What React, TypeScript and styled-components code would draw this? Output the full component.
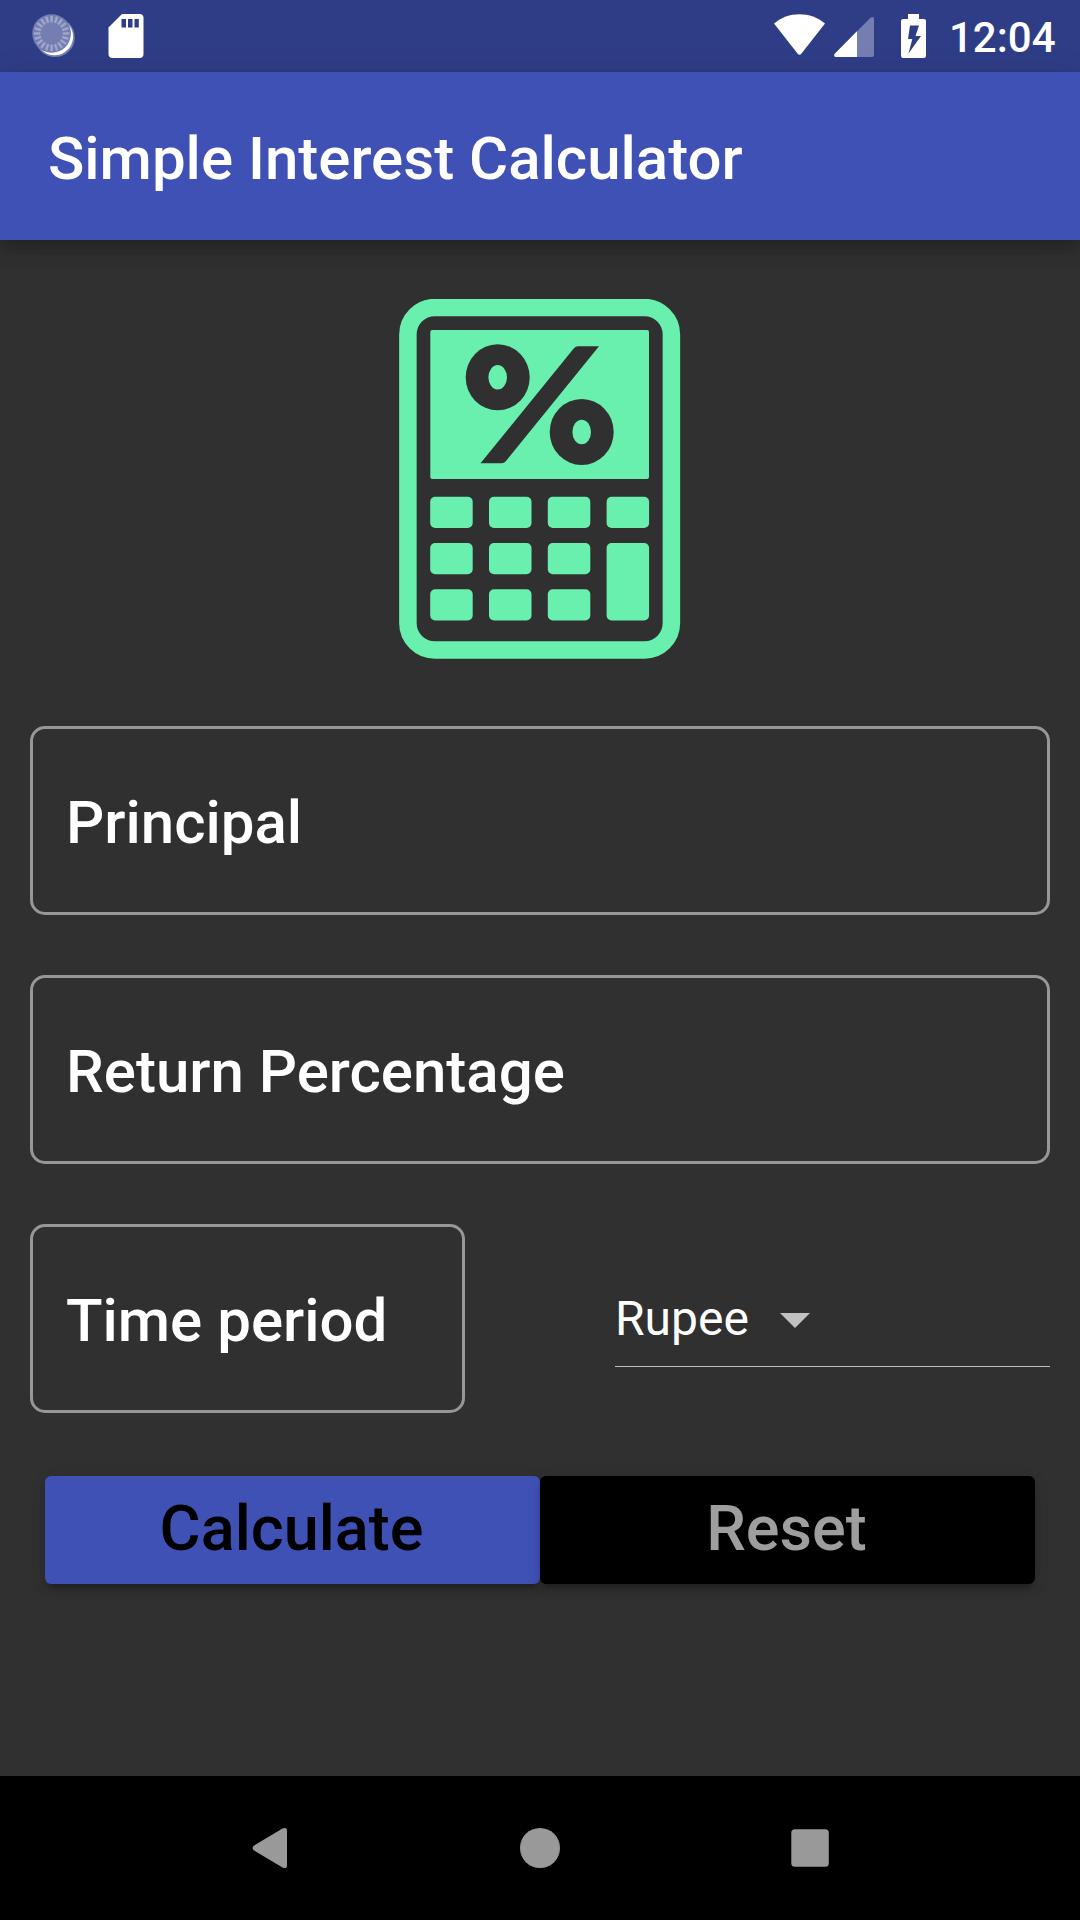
import React from "react";
import styled, { createGlobalStyle } from "styled-components";

const GlobalStyle = createGlobalStyle`
  * { box-sizing: border-box; }
  body { margin: 0; background: #303030; }
`;

const Screen = styled.div`
  display: flex;
  flex-direction: column;
  width: 1080px;
  height: 1920px;
  overflow: hidden;
  background: #303030;
  color: #fff;
  font-family: Roboto, "Noto Sans", sans-serif;
`;

const StatusBar = styled.header`
  display: flex;
  justify-content: space-between;
  flex: none;
  height: 72px;
  padding: 0 24.5px 0 32px;
  background: #2f3d87;
`;

const StatusGroup = styled.div`
  display: flex;
  height: 72px;
  svg { display: block; flex: none; }
`;

const Clock = styled.span`
  padding-top: 2px;
  margin-left: 19px;
  font-size: 42px;
  font-weight: 500;
  line-height: 72px;
`;

const AppBar = styled.div`
  display: flex;
  align-items: center;
  flex: none;
  height: 168px;
  padding: 5px 48px 0;
  background: #3f51b5;
  box-shadow: 0 6px 12px -3px rgba(0, 0, 0, 0.14), 0 12px 15px rgba(0, 0, 0, 0.1), 0 3px 30px rgba(0, 0, 0, 0.1);
`;

const Title = styled.h1`
  margin: 0;
  font-size: 60px;
  font-weight: 500;
  line-height: 70px;
`;

const Form = styled.main`
  display: flex;
  flex: 1;
  flex-direction: column;
  gap: 60px;
  padding: 59px 30px 0;
`;

const Logo = styled.svg`
  display: block;
  flex: none;
  align-self: center;
  width: 282px;
  height: 360px;
  margin: 0 0 7px;
`;

const Field = styled.label<{ $width?: number }>`
  display: flex;
  align-items: center;
  flex: none;
  width: ${(p) => (p.$width ? `${p.$width}px` : "100%")};
  height: 189px;
  padding: 4px 33px 0;
  border: 3px solid #979797;
  border-radius: 15px;
  font-size: 60px;
  font-weight: 500;
  line-height: 70px;
`;

const Row = styled.div`
  display: flex;
  align-items: flex-start;
  justify-content: space-between;
`;

const Dropdown = styled.div`
  display: flex;
  gap: 31px;
  width: 435px;
  height: 97px;
  margin-top: 46px;
  border-bottom: 1px solid #bdbdbd;
  font-size: 48px;
  line-height: 97px;
`;

const Arrow = styled.svg`
  display: block;
  width: 30px;
  height: 15px;
  margin-top: 43px;
`;

const Actions = styled.div`
  display: flex;
  margin: 3px 15px 0;
`;

const Button = styled.button<{ $bg: string; $fg: string }>`
  flex: 1;
  height: 108px;
  padding: 0 2px 3px 0;
  border: 0;
  border-radius: 6px;
  background: ${(p) => p.$bg};
  color: ${(p) => p.$fg};
  font: 500 63px/74px Roboto, "Noto Sans", sans-serif;
  box-shadow: 0 9px 3px -6px rgba(0, 0, 0, 0.16), 0 6px 6px rgba(0, 0, 0, 0.12), 0 3px 15px rgba(0, 0, 0, 0.1);
`;

const NavBar = styled.nav`
  display: flex;
  align-items: center;
  justify-content: center;
  gap: 210px;
  flex: none;
  height: 144px;
  background: #000;
  svg { display: block; width: 60px; height: 60px; fill: #999; }
`;

const ticks = Array.from({ length: 20 }, (_, i) => i * 18);

const keys = [0, 1, 2].flatMap((row) =>
  [0, 1, 2, 3].filter((col) => row === 0 || col < 3).map((col) => ({ x: 31.2 + col * 58.8, y: 197.8 + row * 46.2 }))
);

const LeftIcons = () => (
  <svg width="120" height="72" viewBox="32 0 120 72">
    <circle cx="55" cy="37.300" r="19.800" fill="#fff" opacity=".35" />
    <circle cx="54.500" cy="36.700" r="18.600" fill="#fff" />
    <circle cx="51.600" cy="33.500" r="19.300" fill="#747eb1" />
    {ticks.map((a) => (
      <path key={a} d="M51.600 15.800v6.500" stroke="#a0a7cb" strokeWidth="2.400" transform={`rotate(${a} 51.600 33.500)`} />
    ))}
    <path d="M122 14h17.500a4 4 0 0 1 4 4v36a4 4 0 0 1-4 4h-27a4 4 0 0 1-4-4V27.500z" fill="#fff" />
    <path d="M121.500 19h4.500v8.500h-4.500zM128 19h4.500v8.500H128zM134.500 19h4.300v8.500h-4.300z" fill="#2f3d87" />
  </svg>
);

const RightIcons = () => (
  <svg width="158" height="72" viewBox="772 0 158 72">
    <path d="M774 23.500C788 11 811 11 825 23.500L801.500 53.500Q799.500 56 797.500 53.500Z" fill="#fff" />
    <path d="M834.500 54L870.500 17.800Q874 15.500 874 19V55Q874 57 872 57H836Q833.500 57 834.500 54Z" fill="#747eb1" />
    <path d="M834.500 54L857 31.300V57H836Q833.500 57 834.500 54Z" fill="#fff" />
    <path d="M908 14h11v5h5q2 0 2 2v35q0 2-2 2h-21q-2 0-2-2V21q0-2 2-2h5z" fill="#fff" />
    <path d="M910 25.500h9l-3.500 10.500h5.500L908.500 53.500l3.800-14.500H908z" fill="#2f3d87" />
  </svg>
);

const Calculator = () => (
  <Logo viewBox="0 0 282 360">
    <rect x="8.900" y="8.500" width="263.500" height="342.500" rx="27" fill="none" stroke="#69f0ae" strokeWidth="17.500" />
    <rect x="31.300" y="31" width="218.700" height="149" rx="2" fill="#69f0ae" />
    <g fill="#303030">
      <ellipse cx="98.700" cy="78.300" rx="32" ry="33" />
      <ellipse cx="182.700" cy="133" rx="32" ry="33" />
      <path d="M179 47.300h21L107 162q-1.800 2.300-4.500 2.300H81.500L174.500 49.700q2-2.400 4.500-2.400z" />
    </g>
    <g fill="#69f0ae">
      <ellipse cx="98.700" cy="78.300" rx="9.300" ry="12.200" />
      <ellipse cx="182.700" cy="133" rx="9.300" ry="12.200" />
      {keys.map((k) => (
        <rect key={`${k.x}-${k.y}`} x={k.x} y={k.y} width="42.500" height="31.200" rx="5" />
      ))}
      <rect x="207.600" y="244" width="42.500" height="77.400" rx="5" />
    </g>
  </Logo>
);

export default function App() {
  return (
    <>
      <GlobalStyle />
      <Screen>
        <StatusBar>
          <StatusGroup>
            <LeftIcons />
          </StatusGroup>
          <StatusGroup>
            <RightIcons />
            <Clock>12:04</Clock>
          </StatusGroup>
        </StatusBar>
        <AppBar>
          <Title>Simple Interest Calculator</Title>
        </AppBar>
        <Form>
          <Calculator />
          <Field>Principal</Field>
          <Field>Return Percentage</Field>
          <Row>
            <Field $width={435}>Time period</Field>
            <Dropdown>
              <span>Rupee</span>
              <Arrow viewBox="0 0 30 15">
                <path d="M0 0h30L15 15z" fill="#c1c1c1" />
              </Arrow>
            </Dropdown>
          </Row>
          <Actions>
            <Button $bg="#3f51b5" $fg="#000">Calculate</Button>
            <Button $bg="#000" $fg="#9e9e9e">Reset</Button>
          </Actions>
        </Form>
        <NavBar>
          <svg viewBox="0 0 60 60">
            <path d="M13.700 27.800L42.500 10.500Q47 8.500 47 13V47Q47 51.500 42.500 49.500L13.700 32.200Q11.500 30 13.700 27.800Z" />
          </svg>
          <svg viewBox="0 0 60 60">
            <circle cx="30" cy="30" r="20" />
          </svg>
          <svg viewBox="0 0 60 60">
            <rect x="11.300" y="11.200" width="37.500" height="37.600" rx="3.500" />
          </svg>
        </NavBar>
      </Screen>
    </>
  );
}
